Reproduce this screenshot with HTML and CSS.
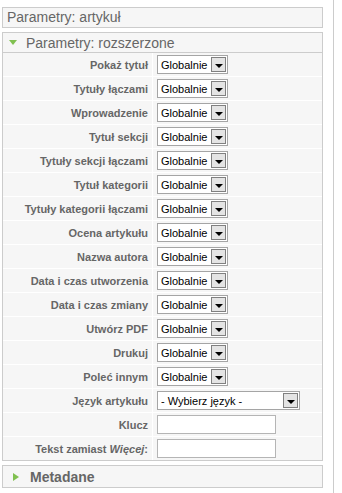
FILE: index.html
```html
<!DOCTYPE html>
<html lang="pl">
<head>
    <meta charset="UTF-8">
    <meta name="viewport" content="width=device-width, initial-scale=1.0">
    <title>Parametry: artykuł</title>
    <link rel="stylesheet" href="styles.css">
</head>
<body>

    <div class="column">
        <div class="title-box">Parametry: artykuł</div>

        <div class="panel">
            <h3 class="toggler open"><span class="arrow-down"></span>Parametry: rozszerzone</h3>
            <table class="paramlist">
                <tr><td class="key">Pokaż tytuł</td><td class="value"><span class="select"><select><option>Globalnie</option></select><span class="btn"></span></span></td></tr>
                <tr><td class="key">Tytuły łączami</td><td class="value"><span class="select"><select><option>Globalnie</option></select><span class="btn"></span></span></td></tr>
                <tr><td class="key">Wprowadzenie</td><td class="value"><span class="select"><select><option>Globalnie</option></select><span class="btn"></span></span></td></tr>
                <tr><td class="key">Tytuł sekcji</td><td class="value"><span class="select"><select><option>Globalnie</option></select><span class="btn"></span></span></td></tr>
                <tr><td class="key">Tytuły sekcji łączami</td><td class="value"><span class="select"><select><option>Globalnie</option></select><span class="btn"></span></span></td></tr>
                <tr><td class="key">Tytuł kategorii</td><td class="value"><span class="select"><select><option>Globalnie</option></select><span class="btn"></span></span></td></tr>
                <tr><td class="key">Tytuły kategorii łączami</td><td class="value"><span class="select"><select><option>Globalnie</option></select><span class="btn"></span></span></td></tr>
                <tr><td class="key">Ocena artykułu</td><td class="value"><span class="select"><select><option>Globalnie</option></select><span class="btn"></span></span></td></tr>
                <tr><td class="key">Nazwa autora</td><td class="value"><span class="select"><select><option>Globalnie</option></select><span class="btn"></span></span></td></tr>
                <tr><td class="key">Data i czas utworzenia</td><td class="value"><span class="select"><select><option>Globalnie</option></select><span class="btn"></span></span></td></tr>
                <tr><td class="key">Data i czas zmiany</td><td class="value"><span class="select"><select><option>Globalnie</option></select><span class="btn"></span></span></td></tr>
                <tr><td class="key">Utwórz PDF</td><td class="value"><span class="select"><select><option>Globalnie</option></select><span class="btn"></span></span></td></tr>
                <tr><td class="key">Drukuj</td><td class="value"><span class="select"><select><option>Globalnie</option></select><span class="btn"></span></span></td></tr>
                <tr><td class="key">Poleć innym</td><td class="value"><span class="select"><select><option>Globalnie</option></select><span class="btn"></span></span></td></tr>
                <tr><td class="key">Język artykułu</td><td class="value"><span class="select wide"><select><option>- Wybierz język -</option></select><span class="btn"></span></span></td></tr>
                <tr><td class="key">Klucz</td><td class="value"><input type="text" class="text-input"></td></tr>
                <tr><td class="key">Tekst zamiast <em>Więcej</em>:</td><td class="value"><input type="text" class="text-input"></td></tr>
            </table>
        </div>

        <div class="panel">
            <h3 class="toggler closed"><span class="arrow-right"></span>Metadane</h3>
        </div>
    </div>

</body>
</html>
```

FILE: styles.css
```css
html, body {
    margin: 0;
    padding: 0;
}

body {
    font-family: 'Liberation Sans', Arial, sans-serif;
    background: #fff;
    color: #666;
}

.column {
    width: 334px;
    min-height: 493px;
    box-sizing: border-box;
    border-right: 1px solid #ccc;
    padding: 7px 10px 0 2px;
}

.title-box {
    height: 19px;
    line-height: 19px;
    padding: 0 4px;
    font-size: 14px;
    background: #f6f6f6;
    border: 1px solid #ccc;
    margin-bottom: 4px;
}

.panel {
    background: #f6f6f6;
    border: 1px solid #ccc;
    margin-bottom: 4px;
}

.toggler {
    display: flex;
    align-items: center;
    margin: 0;
    height: 19px;
    font-size: 14px;
    font-weight: normal;
    color: #666;
    padding-left: 6px;
}

.toggler.open {
    border-bottom: 1px solid #ccc;
}

.toggler.closed {
    height: 21px;
    font-weight: bold;
}

.arrow-down {
    width: 0;
    height: 0;
    border-left: 4px solid transparent;
    border-right: 4px solid transparent;
    border-top: 5px solid #80c050;
    margin-right: 9px;
}

.arrow-right {
    width: 0;
    height: 0;
    border-top: 4px solid transparent;
    border-bottom: 4px solid transparent;
    border-left: 6px solid #80c050;
    margin-right: 11px;
    margin-left: 4px;
}

.paramlist {
    width: 100%;
    border-collapse: collapse;
}

.paramlist td {
    height: 23px;
    padding: 0;
    border-bottom: 1px solid #fff;
}

.paramlist tr:last-child td {
    border-bottom: none;
}

.paramlist td.key {
    width: 145px;
    padding-right: 4px;
    text-align: right;
    font-size: 11px;
    font-weight: bold;
    color: #666;
    border-right: 1px solid #fff;
}

.paramlist td.value {
    padding-left: 4px;
}

.select {
    position: relative;
    display: inline-block;
    vertical-align: middle;
}

.select select {
    appearance: none;
    -webkit-appearance: none;
    display: block;
    width: 71px;
    height: 19px;
    margin: 0;
    padding: 0 0 0 3px;
    border: 1px solid #a5a5a5;
    border-radius: 0;
    background: #fff;
    font-family: 'Liberation Sans', Arial, sans-serif;
    font-size: 11px;
    color: #000;
}

.select.wide select {
    width: 143px;
}

.btn {
    position: absolute;
    top: 2px;
    right: 2px;
    width: 13px;
    height: 13px;
    border: 1px solid #808080;
    background: #e4e4e4;
    pointer-events: none;
}

.btn::after {
    content: '';
    position: absolute;
    left: 3px;
    top: 6px;
    border-left: 4px solid transparent;
    border-right: 4px solid transparent;
    border-top: 4px solid #000;
}

.text-input {
    display: block;
    width: 119px;
    height: 19px;
    box-sizing: border-box;
    margin: 0;
    border: 1px solid #b5b5b5;
    background: #fff;
}

em {
    font-style: italic;
}
```
